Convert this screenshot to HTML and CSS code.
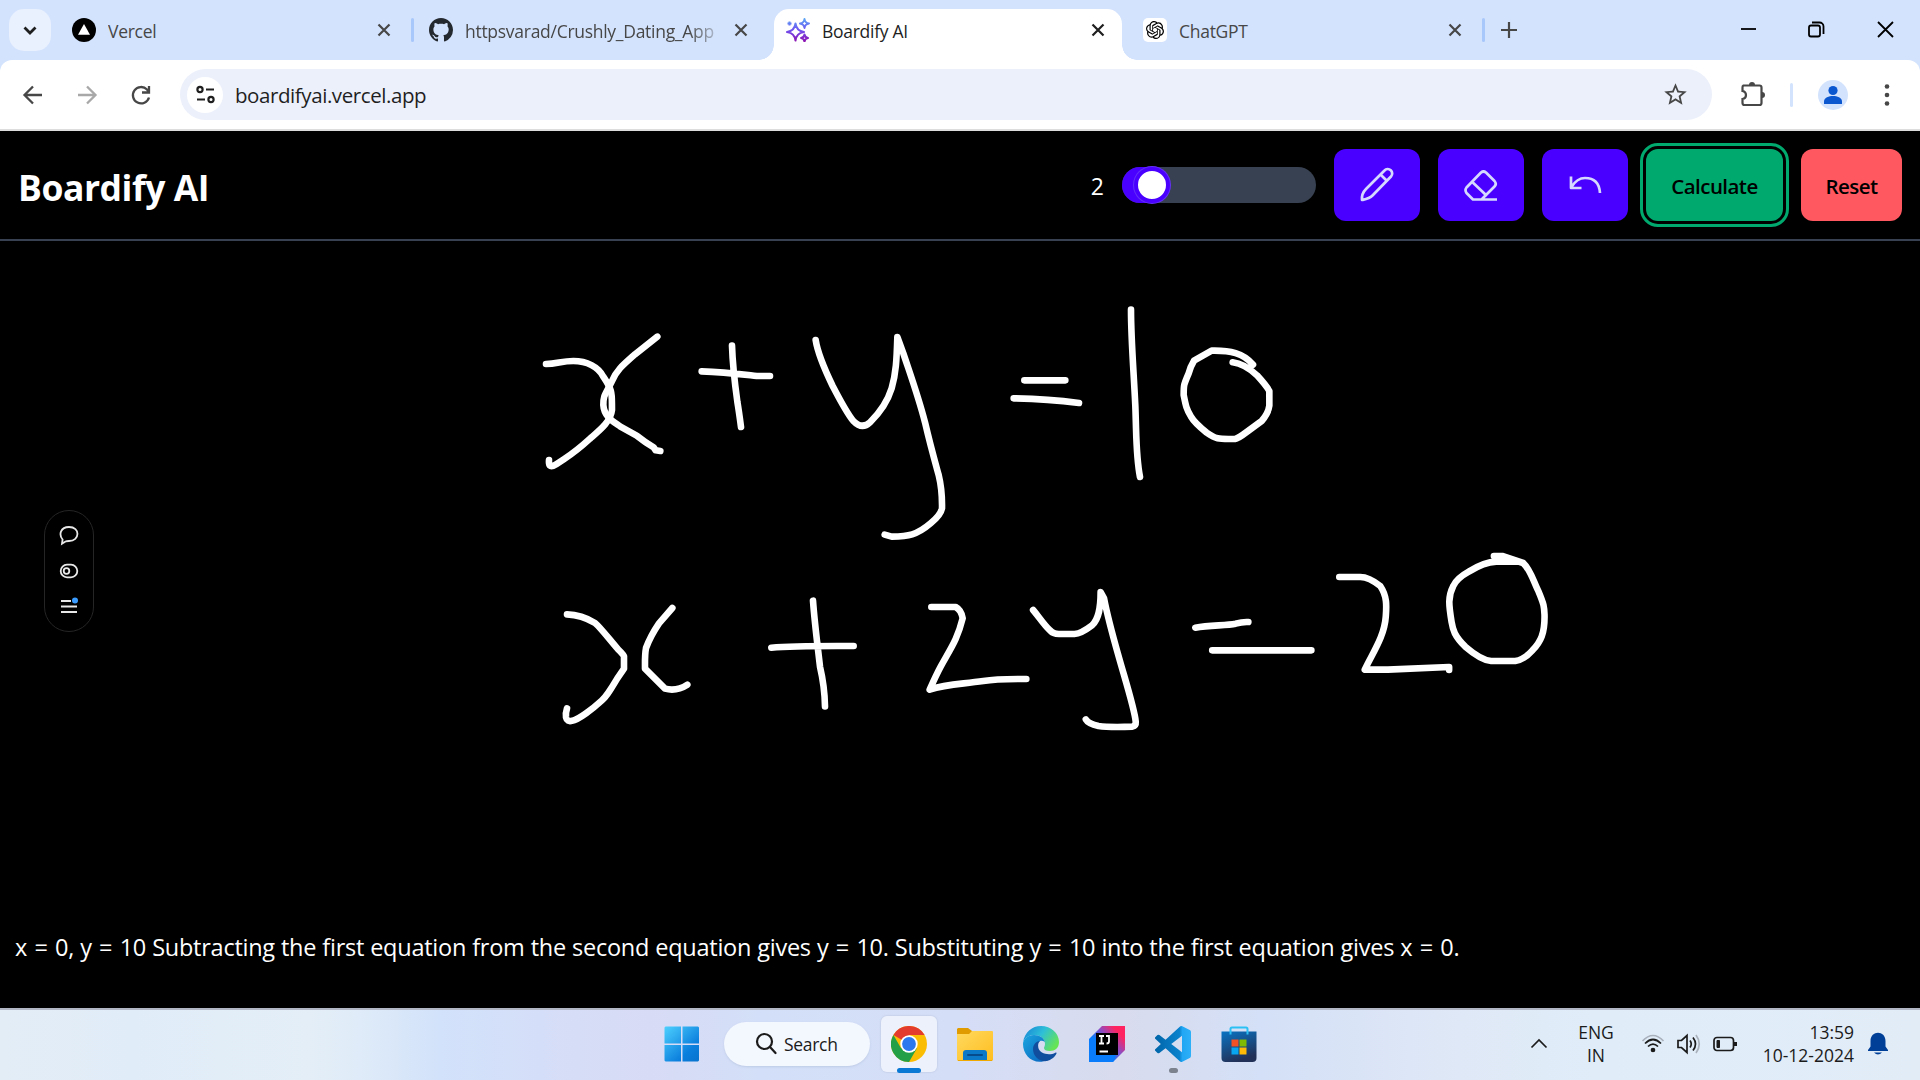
FILE: index.html
```html
<!DOCTYPE html>
<html lang="en">
<head>
<meta charset="utf-8">
<title>Boardify AI</title>
<link rel="stylesheet" href="styles.css">
</head>
<body>
<div class="screen">
  <div class="tabstrip">
    <button class="tab-search"><svg width="24" height="24" viewBox="0 0 24 24" fill="none" stroke="#1f1f1f" stroke-width="2.8"><path d="M6.5 9.5l5.5 5.5 5.5-5.5"/></svg></button>
    <div class="tab">
      <svg width="24" height="24" viewBox="0 0 24 24"><circle cx="12" cy="12" r="12"/><path d="M12 6l6 10.800H6z" fill="#fff"/></svg>
      <span class="tab-label">Vercel</span>
      <svg class="close" viewBox="0 0 24 24"><path d="M6.500 6.500l11 11M17.500 6.500l-11 11"/></svg>
    </div>
    <div class="divider"><i></i></div>
    <div class="tab">
      <svg width="24" height="24" viewBox="0 0 16 16" fill="#24292f"><path d="M8 0C3.580 0 0 3.580 0 8c0 3.540 2.290 6.530 5.470 7.590.4.070.55-.17.55-.38 0-.19-.01-.82-.01-1.490-2.010.37-2.530-.49-2.690-.94-.09-.23-.48-.94-.82-1.130-.28-.15-.68-.52-.01-.53.63-.01 1.080.58 1.230.82.72 1.210 1.870.87 2.330.66.07-.52.28-.87.51-1.070-1.780-.2-3.640-.89-3.640-3.950 0-.87.31-1.590.82-2.150-.08-.2-.36-1.020.08-2.120 0 0 .67-.21 2.200.82.64-.18 1.320-.27 2-.27s1.360.09 2 .27c1.530-1.040 2.200-.82 2.200-.82.44 1.100.16 1.920.08 2.120.51.56.82 1.270.82 2.150 0 3.070-1.870 3.750-3.650 3.950.29.25.54.73.54 1.480 0 1.070-.01 1.930-.01 2.200 0 .21.15.46.55.38A8.010 8.010 0 0 0 16 8c0-4.420-3.580-8-8-8z"/></svg>
      <span class="tab-label fade">httpsvarad/Crushly_Dating_App</span>
      <svg class="close" viewBox="0 0 24 24"><path d="M6.500 6.500l11 11M17.500 6.500l-11 11"/></svg>
    </div>
    <div class="divider"></div>
    <div class="tab active">
      <svg width="24" height="24" viewBox="0 0 24 24" fill="none" stroke="url(#spark)" stroke-width="2" stroke-linejoin="round"><defs><linearGradient id="spark" gradientUnits="userSpaceOnUse" x1="0" y1="0" x2="0" y2="24"><stop offset="0" stop-color="#5aa9f5"/><stop offset=".5" stop-color="#7052f0"/><stop offset="1" stop-color="#8d0fae"/></linearGradient></defs><path d="M9.500 5.500q1 7.500 8.500 8.500-7.500 1-8.500 8.500Q8.500 15 1 14q7.500-1 8.500-8.500zM18.500 1q.5 4 4.500 4.500-4 .5-4.500 4.500-.5-4-4.500-4.500 4-.5 4.500-4.500zM18.500 16.500q.5 3 3.500 3.500-3 .5-3.500 3.500-.5-3-3.500-3.500 3-.5 3.500-3.500zM3.500 3.500v4M1.500 5.500h4"/></svg>
      <span class="tab-label">Boardify AI</span>
      <svg class="close" viewBox="0 0 24 24"><path d="M6.500 6.500l11 11M17.500 6.500l-11 11"/></svg>
    </div>
    <div class="divider"></div>
    <div class="tab">
      <span class="gpt"><svg width="18" height="18" viewBox="0 0 24 24"><path d="M22.2819 9.8211a5.9847 5.9847 0 0 0-.5157-4.9108 6.0462 6.0462 0 0 0-6.5098-2.9A6.0651 6.0651 0 0 0 4.9807 4.1818a5.9847 5.9847 0 0 0-3.9977 2.9 6.0462 6.0462 0 0 0 .7427 7.0966 5.98 5.98 0 0 0 .511 4.9107 6.051 6.051 0 0 0 6.5146 2.9001A5.9847 5.9847 0 0 0 13.2599 24a6.0557 6.0557 0 0 0 5.7718-4.2058 5.9894 5.9894 0 0 0 3.9977-2.9001 6.0557 6.0557 0 0 0-.7475-7.0729zm-9.022 12.6081a4.4755 4.4755 0 0 1-2.8764-1.0408l.1419-.0804 4.7783-2.7582a.7948.7948 0 0 0 .3927-.6813v-6.7369l2.02 1.1686a.071.071 0 0 1 .038.052v5.5826a4.504 4.504 0 0 1-4.4945 4.4944zm-9.6607-4.1254a4.4708 4.4708 0 0 1-.5346-3.0137l.142.0852 4.783 2.7582a.7712.7712 0 0 0 .7806 0l5.8428-3.3685v2.3324a.0804.0804 0 0 1-.0332.0615L9.74 19.9502a4.4992 4.4992 0 0 1-6.1408-1.6464zM2.3408 7.8956a4.485 4.485 0 0 1 2.3655-1.9728V11.6a.7664.7664 0 0 0 .3879.6765l5.8144 3.3543-2.0201 1.1685a.0757.0757 0 0 1-.071 0l-4.8303-2.7865A4.504 4.504 0 0 1 2.3408 7.872zm16.5963 3.8558L13.1038 8.364 15.1192 7.2a.0757.0757 0 0 1 .071 0l4.8303 2.7913a4.4944 4.4944 0 0 1-.6765 8.1042v-5.6772a.79.79 0 0 0-.407-.667zm2.0107-3.0231l-.142-.0852-4.7735-2.7818a.7759.7759 0 0 0-.7854 0L9.409 9.2297V6.8974a.0662.0662 0 0 1 .0284-.0615l4.8303-2.7866a4.4992 4.4992 0 0 1 6.6802 4.66zM8.3065 12.863l-2.02-1.1638a.0804.0804 0 0 1-.038-.0567V6.0742a4.4992 4.4992 0 0 1 7.3757-3.4537l-.142.0805L8.704 5.459a.7948.7948 0 0 0-.3927.6813zm1.0976-2.3654l2.602-1.4998 2.6069 1.4998v2.9994l-2.5974 1.4997-2.6067-1.4997Z"/></svg></span>
      <span class="tab-label">ChatGPT</span>
      <svg class="close" viewBox="0 0 24 24"><path d="M6.500 6.500l11 11M17.500 6.500l-11 11"/></svg>
    </div>
    <div class="divider"><i></i></div>
    <svg width="42" height="42" viewBox="0 0 42 42" stroke="#474747" stroke-width="2.2"><path d="M13 21h16M21 13v16"/></svg>
    <div class="window-controls">
      <svg width="69" height="58" viewBox="0 0 69 58"><path d="M28 29h15"/></svg>
      <svg width="69" height="58" viewBox="0 0 69 58"><rect x="27" y="25.500" width="11" height="11" rx="2"/><path d="M30 22.500h7.500a4 4 0 0 1 4 4V34"/></svg>
      <svg width="69" height="58" viewBox="0 0 69 58"><path d="M27 22l15 15M42 22L27 37"/></svg>
    </div>
  </div>

  <div class="toolbar">
    <div class="nav">
      <svg width="30" height="30" viewBox="0 0 30 30"><path d="M24 15H7M15 6.500L6.500 15l8.500 8.500"/></svg>
      <svg class="off" width="30" height="30" viewBox="0 0 30 30"><path d="M6 15h17M15 6.500l8.500 8.500-8.500 8.500"/></svg>
      <svg width="30" height="30" viewBox="0 0 30 30"><path d="M23 17.500A8.200 8.200 0 1 1 21 9.500l2 2.500M23 6v6.500h-7"/></svg>
    </div>
    <div class="omnibox">
      <span class="site-info"><svg width="21" height="21" viewBox="0 0 21 21" fill="none" stroke="#1f1f1f" stroke-width="2.200"><circle cx="5" cy="5.500" r="2.600"/><path d="M11 5.500h8M2 15.500h8"/><circle cx="16" cy="15.500" r="2.600"/></svg></span>
      <span class="url">boardifyai.vercel.app</span>
      <svg width="27" height="27" viewBox="0 0 24 24" fill="#474747"><path d="M22 9.240l-7.190-.62L12 2 9.190 8.630 2 9.240l5.460 4.730L5.820 21 12 17.270 18.180 21l-1.630-7.030L22 9.240zM12 15.400l-3.760 2.270 1-4.280-3.320-2.880 4.380-.38L12 6.100l1.710 4.040 4.380.38-3.320 2.880 1 4.280L12 15.400z"/></svg>
    </div>
    <div class="actions">
      <svg width="30" height="30" viewBox="0 0 30 30"><path d="M5.500 5.500h16a2 2 0 0 1 2 2v15.500a2 2 0 0 1-2 2h-15a2 2 0 0 1-2-2v-4q3.500-.6 3.500-4t-3.500-4V7.500a2 2 0 0 1 1-2z" fill="none" stroke="#474747" stroke-width="2.200"/><path d="M11 5a3 3 0 0 1 6 0zM24 12a3 3 0 0 1 0 6z" fill="#474747"/></svg>
      <i class="bar"></i>
      <svg width="30" height="30" viewBox="0 0 30 30"><circle cx="15" cy="15" r="15" fill="#d3e3fd"/><circle cx="15" cy="10.500" r="4.600" fill="#0b57d0"/><path d="M6 24v-2.500c0-4 5-5.500 9-5.500s9 1.500 9 5.500V24z" fill="#0b57d0"/></svg>
      <svg width="12" height="30" viewBox="0 0 12 30" fill="#474747"><circle cx="6" cy="6.500" r="2.300"/><circle cx="6" cy="15" r="2.300"/><circle cx="6" cy="23.500" r="2.300"/></svg>
    </div>
  </div>

  <header class="app-header">
    <h1 class="brand">Boardify AI</h1>
    <div class="tools">
      <span class="size">2</span>
      <div class="range"><div class="fill"><i class="thumb"></i></div></div>
      <button class="btn primary"><svg width="36" height="36" viewBox="0 0 36 36"><path d="M3 33c-.5-5 1-8 4-11L25.500 3.500a4.300 4.300 0 0 1 6.500 6L13.500 28.500c-3 3-6 3.500-10.500 4.500zM21.500 7.500l6 6"/></svg></button>
      <button class="btn primary"><svg width="36" height="36" viewBox="0 0 36 36"><path d="M34 32.500H10L3.500 26q-2-3 0-5.500L18 5.500q2.500-2 5 0l8.500 8.500q2.500 3 0 5.500L18.500 32.500M9 14.800L24 29"/></svg></button>
      <button class="btn primary"><svg width="36" height="36" viewBox="0 0 36 36"><path d="M4 9.500v11.500H14.500M4.500 20Q10 11 18 11q14 0 15 15"/></svg></button>
      <button class="btn success"><span>Calculate</span></button>
      <button class="btn danger"><span>Reset</span></button>
    </div>
  </header>

  <main class="board">
    <svg class="ink" width="1920" height="767" viewBox="0 241 1920 767">
      <g transform="translate(520 280) scale(.333333)">
        <path d="M78 252C110 252 125 243 160 243C200 243 235 260 250 290C280 335 275 340 276 390C272 425 240 450 210 476C160 522 150 525 110 552Q95 562 89 556Q86 552 87 540"/>
        <path d="M412 170L345 223C305 258 288 273 275 305C255 345 250 345 250 375C252 410 280 425 300 439L350 467C375 487 385 493 401 502L407 511L421 513"/>
        <path d="M545 274C610 276 640 280 710 288H750M636 197C638 260 643 300 652 365Q657 395 663 441"/>
        <path d="M887 180C893 220 910 260 938 318C965 370 985 405 1000 423Q1026 450 1050 427C1080 398 1101 370 1115 325C1128 280 1130 240 1132 171L1150 220C1175 295 1195 350 1215 427C1232 500 1243 538 1256 585Q1267 630 1266 685Q1262 705 1232 730C1190 766 1165 769 1115 770L1094 764"/>
      </g>
      <g transform="translate(960 280) scale(.333333)">
        <path d="M193 301H316M161 355Q260 356 357 369M513 89C513 180 521 270 526 378C530 490 528 530 540 591"/>
        <path d="M879 254C850 218 810 211 755 212L702 242Q691 260 686 280C671 315 671 315 671 345C677 375 678 385 693 410Q703 428 740 458C770 480 780 477 825 477Q835 475 860 456L905 423Q925 400 928 377V333Q920 318 891 286C865 262 845 250 818 247"/>
      </g>
      <g transform="translate(520 540) scale(.333333)">
        <path d="M141 223Q185 224 225 249C242 263 268 298 295 329Q312 345 312 349V386L292 415C264 462 258 470 245 482C220 505 175 540 157 542Q141 547 138 532Q136 520 141 505"/>
        <path d="M457 204L417 250C400 275 385 305 378 324C374 345 375 365 375 386L435 446Q470 455 502 434"/>
        <path d="M754 323Q820 317 1001 318M879 182C884 250 892 310 900 380Q914 440 915 499M1234 201H1307Q1324 210 1328 235C1312 300 1292 325 1262 380Q1250 402 1229 449C1280 432 1320 433 1390 423Q1430 417 1519 417"/>
      </g>
      <g transform="translate(1040 530) scale(.344388 .333333)">
        <path d="M-20 240C-2 262 12 285 28 300Q38 312 55 312H100Q119 311 151 286C172 266 176 230 176 186L186 205C198 270 215 330 230 385C252 465 275 540 278 575Q279 587 268 590C210 592 190 591 170 588Q140 581 133 568"/>
        <path d="M451 293C495 285 540 287 568 281Q588 275 605 276M500 361H788M869 141H930Q955 141 988 168C1009 200 1006 230 1004 260C1000 320 965 370 943 419H1010L1188 411V420"/>
        <path d="M1318 78H1342L1403 99C1425 120 1435 160 1447 183C1464 225 1464 230 1465 255C1466 310 1454 335 1430 361Q1406 389 1380 393H1310Q1280 390 1235 350C1203 317 1199 300 1195 275C1187 225 1184 200 1200 168Q1210 145 1245 125Q1290 96 1325 95H1385"/>
      </g>
    </svg>
    <aside class="dock">
      <svg width="20" height="20" viewBox="0 0 20 20"><path d="M3 17.700l.6-4.200C-.5 8.500 1.500 1 10 1c11.500 0 11 14 0 14-2 0-2.500 0-3.500.5z"/></svg>
      <svg width="20" height="20" viewBox="0 0 20 20"><rect x="1.700" y="3.700" width="16.600" height="12.600" rx="6.300"/><circle cx="7.500" cy="10" r="2.800"/></svg>
      <svg width="20" height="20" viewBox="0 0 20 20"><path d="M2 5h10M2 10.500h16M2 16h16"/><circle class="dot" cx="16" cy="4.500" r="3"/></svg>
    </aside>
    <p class="answer">x <b>=</b> 0, y <b>=</b> 10 Subtracting the first equation from the second equation gives y <b>=</b> 10. Substituting y <b>=</b> 10 into the first equation gives x <b>=</b> 0.</p>
  </main>

  <footer class="taskbar">
    <div class="apps">
      <svg class="start" width="36" height="36" viewBox="0 0 36 36"><defs><linearGradient id="win" gradientUnits="userSpaceOnUse" x1="0" y1="0" x2="32" y2="34"><stop offset="0" stop-color="#4ed2ff"/><stop offset=".75" stop-color="#0b7fdd"/><stop offset="1" stop-color="#0875d1"/></linearGradient></defs><path d="M1.500.5H17v17H.5v-16zM18.500.5H34l1 1v16H18.500zM.5 19H17v16.500H1.500l-1-1zM18.500 19H35v15.500l-1 1H18.500z" fill="url(#win)"/></svg>
      <div class="search"><svg width="22" height="24" viewBox="0 0 22 24" fill="none" stroke="#1b1b1b" stroke-width="2.200" stroke-linecap="round"><circle cx="9.500" cy="9.500" r="7.500"/><path d="M15 15l5.500 6"/></svg><span>Search</span></div>
      <div class="app current"><svg width="36" height="36" viewBox="0 0 36 36"><circle cx="18" cy="18" r="18" fill="#fbbc04"/><path d="M18 18L2.400 9A18 18 0 0 1 33.600 9H18z" fill="#e33b2e"/><path d="M2.400 9A18 18 0 0 0 18 36l7.800-13.500L18 18 10.200 22.500z" fill="#23a047"/><circle cx="18" cy="18" r="8.700" fill="#fff"/><circle cx="18" cy="18" r="6.900" fill="#2b78ee"/></svg><i class="run"></i></div>
      <div class="app"><svg width="36" height="36" viewBox="0 0 36 36"><defs><linearGradient id="fold" x1="0" y1="0" x2="1" y2="1"><stop offset="0" stop-color="#ffd95f"/><stop offset="1" stop-color="#ffbe20"/></linearGradient></defs><path d="M1 2h10l4 3v5H0V3z" fill="#df9b00"/><path d="M0 8h12l3-3h20q1 0 1 1v28.500H0z" fill="url(#fold)"/><path d="M6 34.500V27q0-3 3-3h18q3 0 3 3v7.500z" fill="#0b78c8"/><path d="M11 29h14" stroke="#064b8b" stroke-width="2" stroke-linecap="round"/><path d="M1 34.500h34" stroke="#f0a900"/></svg></div>
      <div class="app"><svg width="36" height="36" viewBox="0 0 36 36"><defs><linearGradient id="ea" x1="0" y1=".1" x2="1" y2=".6"><stop offset="0" stop-color="#1684d8"/><stop offset=".5" stop-color="#2ebfd8"/><stop offset="1" stop-color="#67e454"/></linearGradient><linearGradient id="eb" x1="0" y1="0" x2="1" y2="1"><stop offset="0" stop-color="#1ba5df"/><stop offset="1" stop-color="#0962be"/></linearGradient></defs><path d="M0 16C2 6 9 0 18 0c10 0 18 7 18 16 0 6-4 9-9 9-4 0-6-1-6-3 0-1 1-2 1-4 0-5-4-9-11-9C6 9 2 12 0 16z" fill="url(#ea)"/><path d="M0 18C0 13 5 9 11 9c6 0 10 3 10.800 7-4-3-8 0-8 5 0 7 6 12 11 13C11 40 0 30 0 18z" fill="url(#eb)"/><path d="M17 15c-4 0-7 4-7 8 0 8 7 13 14 12 4-1 8-4 9.500-7.500.3-.8-.5-1.200-1.200-.8-6 3.300-16 1-17-5.200-.5-3 0-5 1.700-6.500z" fill="#114f9e"/></svg></div>
      <div class="app"><svg width="36" height="36" viewBox="0 0 36 36"><defs><linearGradient id="ij" x1=".1" y1=".8" x2=".9" y2=".1"><stop offset=".3" stop-color="#087cfa"/><stop offset=".58" stop-color="#8b4dc5"/><stop offset=".9" stop-color="#ff245f"/></linearGradient></defs><path d="M13 0h23v24L24 36H0V13z" fill="url(#ij)"/><path d="M0 14l7-3v18h20l-3 7H0z" fill="#087cfa"/><path d="M7 7h22v22H7z"/><path d="M10 10h5M12.500 10v8M10 17.500h5M17 10h3v5.500q0 2-2.500 2M10.500 25.500H19" fill="none" stroke="#fff" stroke-width="1.800"/></svg></div>
      <div class="app"><svg width="36" height="36" viewBox="0 0 24 24"><defs><linearGradient id="vs"><stop offset="0" stop-color="#0065a9"/><stop offset=".68" stop-color="#0b82cd"/><stop offset=".76" stop-color="#20a6f4"/><stop offset="1" stop-color="#2eb0f8"/></linearGradient></defs><path fill="url(#vs)" d="M23.15 2.587L18.21.21a1.494 1.494 0 0 0-1.705.29l-9.46 8.63-4.12-3.128a.999.999 0 0 0-1.276.057L.327 7.261A1 1 0 0 0 .326 8.74L3.899 12 .326 15.26a1 1 0 0 0 .001 1.479L1.65 17.94a.999.999 0 0 0 1.276.057l4.12-3.128 9.46 8.63a1.492 1.492 0 0 0 1.704.29l4.942-2.377A1.5 1.5 0 0 0 24 20.06V3.939a1.5 1.5 0 0 0-.85-1.352zm-5.146 14.861L10.826 12l7.178-5.448v10.896z"/></svg><i class="run idle"></i></div>
      <div class="app"><svg width="36" height="36" viewBox="0 0 36 36"><defs><linearGradient id="st" x1="0" y1="0" x2=".4" y2="1"><stop offset="0" stop-color="#0873c3"/><stop offset="1" stop-color="#223158"/></linearGradient></defs><path d="M.5 5.500h35V32q0 4-4 4h-27q-4 0-4-4z" fill="url(#st)"/><path d="M9.500 8.500V3q0-1.500 1.500-1.500h14q1.500 0 1.500 1.500v5.500" fill="none" stroke="#2cc1f5" stroke-width="2"/><path d="M10.500 13.500h7v7h-7z" fill="#f15125"/><path d="M18.500 13.500h7v7h-7z" fill="#80bb03"/><path d="M10.500 21.500h7v7h-7z" fill="#08a5f0"/><path d="M18.500 21.500h7v7h-7z" fill="#ffba08"/></svg></div>
    </div>
    <div class="tray">
      <svg width="20" height="20" viewBox="0 0 20 20"><path d="M2.500 13.500L10 6l7.500 7.500"/></svg>
      <div class="lang"><span>ENG</span><span>IN</span></div>
      <div class="status">
        <svg width="24" height="24" viewBox="0 0 24 24"><path d="M1.500 9Q12-2 22.500 9" stroke="#a9b1bd"/><path d="M4 11.500q8-8 16 0M7 14.500q5-5 10 0"/><circle cx="12" cy="18" r="1.500" fill="#1b1b1b"/></svg>
        <svg width="24" height="24" viewBox="0 0 24 24"><path d="M1 8.500h3.500L10 3.500v17l-5.500-5H1zM13 8.500q2.500 3.500 0 7M16 5.500q5 6.500 0 13"/><path d="M19 3q6.500 9 0 18" stroke="#a9b1bd"/></svg>
        <svg width="24" height="24" viewBox="0 0 24 24"><rect x="1" y="5.500" width="19.500" height="13" rx="3"/><path d="M4 8.500h2.500v7H4z" fill="#1b1b1b" stroke-width="1"/><path d="M22.500 10v4" stroke-width="3"/></svg>
      </div>
      <div class="clock"><span>13:59</span><span>10-12-2024</span></div>
      <svg class="bell" width="20" height="24" viewBox="0 0 20 24"><path d="M2.500 9C2.500-2 17.500-2 17.500 9v5.500L20 18v1H0v-1l2.500-3.500zM6 20.500h8q-4 4-8 0z"/></svg>
    </div>
  </footer>
</div>
</body>
</html>
```
FILE: styles.css
```css
* { box-sizing: border-box; }
body { margin: 0; background: #000; font-family: "Open Sans", "Noto Sans", sans-serif; font-size: 18px; }
button { border: 0; padding: 0; font-family: inherit; }
svg { display: block; flex: none; }
.screen { width: 1920px; height: 1080px; display: flex; flex-direction: column; overflow: hidden; background: linear-gradient(#d3e3fd 0 90px, #000 90px); }

/* Browser tabs */
.tabstrip { height: 60px; flex: none; display: flex; padding: 9px 0 0 9px; background: #d3e3fd; }
.tab-search { width: 42px; height: 42px; margin-right: 9px; border-radius: 15px; background: #e9f0fe; display: flex; align-items: center; justify-content: center; }
.tab { position: relative; width: 348px; height: 42px; padding: 0 12px; display: flex; align-items: center; gap: 12px; color: #474747; }
.tab-label { flex: 1; overflow: hidden; white-space: nowrap; font-size: 17.500px; line-height: 26px; letter-spacing: -.28px; padding-top: 2px; }
.fade { margin-right: -8px; -webkit-mask-image: linear-gradient(90deg, #000 86%, transparent 100%); mask-image: linear-gradient(90deg, #000 86%, transparent 100%); }
.close { width: 24px; height: 24px; fill: none; stroke: #474747; stroke-width: 2.200; }
.divider { width: 9px; height: 42px; display: flex; align-items: center; justify-content: center; }
.divider i { width: 3px; height: 24px; border-radius: 2px; background: #a8c7fa; }
.active { height: 51px; padding-bottom: 9px; background: #fff; border-radius: 15px 15px 0 0; color: #1f1f1f; }
.active .close { stroke: #1f1f1f; }
.active::before, .active::after { content: ""; position: absolute; bottom: 0; width: 15px; height: 15px; }
.active::before { right: 100%; background: radial-gradient(circle at 0 0, transparent 14.500px, #fff 15px); }
.active::after { left: 100%; background: radial-gradient(circle at 100% 0, transparent 14.500px, #fff 15px); }
.gpt { width: 24px; height: 24px; border-radius: 5px; background: #fff; display: flex; align-items: center; justify-content: center; flex: none; }
.window-controls { display: flex; margin: -9px 0 0 auto; }
.window-controls svg { fill: none; stroke: #000; stroke-width: 1.800; }

/* Address bar */
.toolbar { height: 71px; flex: none; display: flex; align-items: center; padding: 0 27px 0 18px; border-bottom: 2px solid #ddd; border-radius: 12px 12px 0 0; background: #fff; }
.nav { display: flex; gap: 24px; margin-right: 24px; }
.nav svg { fill: none; stroke: #474747; stroke-width: 2.300; }
.nav .off { stroke: #a8a8a8; }
.omnibox { width: 1533px; height: 51px; border-radius: 26px; background: #ecf0fa; display: flex; align-items: center; padding: 0 23px 0 7px; }
.site-info { width: 36px; height: 36px; border-radius: 50%; background: #fff; display: flex; align-items: center; justify-content: center; }
.url { flex: 1; margin-left: 12px; font-size: 20.500px; letter-spacing: -.42px; color: #1f1f1f; }
.actions { margin-left: 26px; display: flex; align-items: center; }
.bar { width: 3px; height: 24px; border-radius: 2px; background: #d3e3fd; margin: 0 25px 0 22px; }
.actions svg:last-child { margin-left: 33px; }

/* App header */
.app-header { height: 110px; flex: none; padding: 18px; display: flex; justify-content: space-between; border-bottom: 2px solid #374151; background: #000; }
.brand { margin: 8px 0 0; color: #fff; font-size: 35.500px; line-height: 60px; font-weight: 700; letter-spacing: -.45px; }
.tools { height: 72px; display: flex; align-items: center; gap: 18px; }
.size { color: #fff; font-size: 23px; padding-top: 1px; }
.range { width: 194px; height: 36px; border-radius: 18px; background: #374151; }
.fill { width: 48px; height: 36px; border-radius: 18px; background: #4a00ff; display: flex; justify-content: flex-end; }
.thumb { width: 36px; height: 36px; border-radius: 50%; border: 4px solid #4a00ff; background: #fff; box-shadow: 0 0 0 1px #6430f6; }
.btn { height: 72px; border-radius: 12px; display: flex; align-items: center; justify-content: center; font-size: 20.500px; font-weight: 600; letter-spacing: -.55px; color: #000; }
.btn span { padding-top: 2px; }
.primary { width: 86px; background: #4a00ff; }
.primary svg { fill: none; stroke: #d5d9ff; stroke-width: 2.700; stroke-linejoin: round; }
.success { width: 137px; background: #00a96e; outline: 3px solid #00a96e; outline-offset: 3px; }
.danger { width: 101px; background: #ff5861; }

/* Drawing board */
.board { position: relative; flex: 1; min-height: 0; display: flex; flex-direction: column; justify-content: flex-end; background: #000; }
.ink { position: absolute; inset: 0; fill: none; stroke: #fff; stroke-linecap: round; stroke-linejoin: round; }
.ink path { vector-effect: non-scaling-stroke; stroke-width: 6.600px; }
.dock { position: absolute; left: 44px; top: 269px; width: 50px; height: 122px; border: 1px solid #252525; border-radius: 25px; padding: 15px 0; display: flex; flex-direction: column; align-items: center; justify-content: space-between; }
.dock svg { fill: none; stroke: #e8e8e8; stroke-width: 1.800; }
.dock .dot { fill: #3b9cff; stroke: none; }
.answer { margin: 0 15px 43px; color: #fff; font-size: 23.500px; line-height: 36px; letter-spacing: -.25px; word-spacing: .25px; white-space: nowrap; }
.answer b { font-weight: 400; padding: 0 1.300px; }

/* Taskbar */
.taskbar { height: 72px; flex: none; border-top: 2px solid #b1b7c4; display: flex; background: linear-gradient(90deg, #e3edf6 0, #e0ecf8 130px, #e3eef7 310px, #dfebf8 360px, #d2e2fa 440px, #d5def8 540px, #d8dbf5 650px, #d3dff8 760px, #d5def7 960px, #d8dbed 1120px, #d4e0f7 1260px, #dfe8f6 1460px, #e0edf9 1600px, #e1ecf7 1920px); }
.apps { margin-right: auto; padding: 0 0 2px 664px; display: flex; align-items: center; gap: 10px; }
.start { margin-right: 14px; }
.search { width: 146px; height: 44px; border-radius: 22px; background: #f3f7fe; box-shadow: 0 1px 2px #aabbd680; display: flex; align-items: center; padding-left: 31px; gap: 7px; font-size: 17.500px; letter-spacing: -.3px; color: #1b1b1b; }
.app { position: relative; width: 56px; height: 56px; display: flex; align-items: center; justify-content: center; }
.current { margin-left: 1px; border-radius: 6px; background: #edf1fc; box-shadow: 0 0 1px 1px #bcc8e070; }
.run { position: absolute; left: 16px; bottom: -1px; width: 24px; height: 5px; border-radius: 3px; background: #0878d4; }
.run.idle { left: 24px; width: 9px; background: #7c828e; }
.tray { display: flex; align-items: center; padding: 0 32px 2px 0; color: #1b1b1b; font-size: 17.500px; line-height: 23px; letter-spacing: 0; }
.tray svg { fill: none; stroke: #1b1b1b; stroke-width: 1.700; }
.lang { display: flex; flex-direction: column; align-items: center; width: 60px; margin-left: 17px; margin-right: 15px; }
.status { display: flex; gap: 12px; width: 116px; }
.clock { width: 97px; display: flex; flex-direction: column; align-items: flex-end; white-space: nowrap; }
.bell { margin-left: 14px; }
.tray .bell { fill: #003f97; stroke: none; }
```
